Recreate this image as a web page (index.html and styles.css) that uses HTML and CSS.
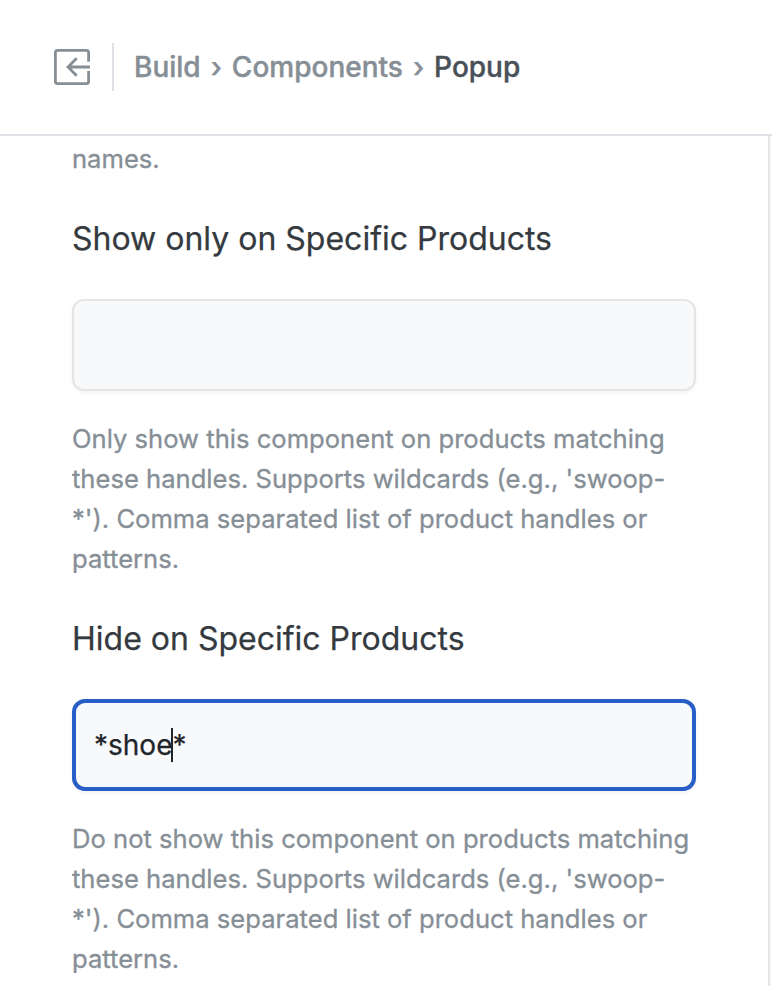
FILE: index.html
```html
<!DOCTYPE html>
<html lang="en">
<head>
<meta charset="utf-8">
<title>Popup</title>
<link rel="stylesheet" href="styles.css">
</head>
<body>
<header class="topbar">
  <svg class="exit" viewBox="0 0 38 38" fill="none" stroke="currentColor" stroke-width="2.8">
    <path d="M35.600 13.800V4.400a2 2 0 0 0-2-2H4.400a2 2 0 0 0-2 2v29.200a2 2 0 0 0 2 2h29.200a2 2 0 0 0 2-2V23"/>
    <path d="M37 19H15M23.700 10.200L15 19l8.700 8.800"/>
  </svg>
  <nav class="crumbs"><span>Build</span><span class="sep">›</span><span>Components</span><span class="sep">›</span><span class="current">Popup</span></nav>
</header>
<main class="panel">
  <p class="help">names.</p>
  <section class="field">
    <h2>Show only on Specific Products</h2>
    <div class="input"></div>
    <p class="help">Only show this component on products matching<br>these handles. Supports wildcards (e.g., 'swoop-<br>*'). Comma separated list of product handles or<br>patterns.</p>
  </section>
  <section class="field">
    <h2>Hide on Specific Products</h2>
    <div class="input focused"><span>*shoe</span><i class="caret"></i><span>*</span></div>
    <p class="help">Do not show this component on products matching<br>these handles. Supports wildcards (e.g., 'swoop-<br>*'). Comma separated list of product handles or<br>patterns.</p>
  </section>
</main>
</body>
</html>
```
FILE: styles.css
```css
* { box-sizing: border-box; }
html, body { height: 100%; overflow: hidden; }
body { margin: 0; background: #fafafa; font-family: Inter, "Liberation Sans", sans-serif; color: #343a40; }
.topbar { height: 136px; background: #fff; border-bottom: 2px solid #dee2e6; padding-left: 53px; display: flex; align-items: center; }
.exit { width: 38px; height: 38px; color: #868e96; flex: none; }
.crumbs { margin-left: 21px; height: 48px; padding-left: 20px; border-left: 2px solid #dee2e6; display: flex; align-items: center; font-size: 28px; font-weight: 500; color: #868e96; white-space: nowrap; -webkit-text-stroke: 0.4px currentColor; }
.sep { margin: 0 10px; }
.current { color: #495057; }
.panel { width: 770px; height: 850px; background: #fff; border-right: 2px solid #e6e6e6; padding: 3px 0 0 72px; overflow: hidden; }
.help { margin: 0; font-size: 25.6px; line-height: 40px; color: #868e96; white-space: nowrap; -webkit-text-stroke: 0.3px currentColor; }
.field { height: 400px; }
h2 { margin: 0; padding-top: 36px; font-size: 32px; line-height: 48px; font-weight: 400; white-space: nowrap; -webkit-text-stroke: 0.25px currentColor; }
.input { margin: 36px 0 28px; width: 624px; height: 92px; border: 2px solid #e5e5e5; border-radius: 12px; background: #f8f9fb; box-shadow: 0 2px 4px rgba(0, 0, 0, 0.05); display: flex; align-items: center; font-size: 28px; color: #212529; padding-left: 20px; -webkit-text-stroke: 0.25px currentColor; }
.focused { border: 4px solid #285ec8; border-radius: 13px; padding-left: 18px; }
.caret { width: 2px; height: 34px; margin: 0 -1px; background: #212529; }
```
